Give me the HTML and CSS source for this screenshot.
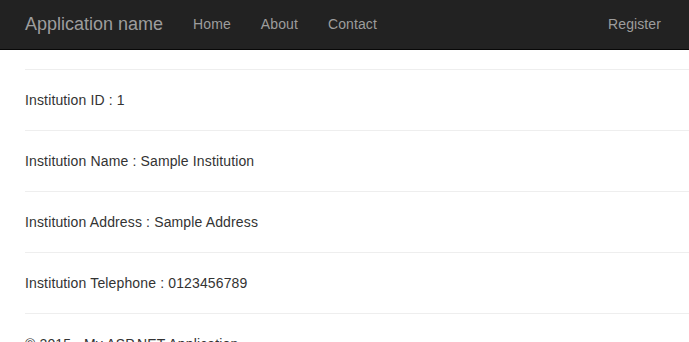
FILE: index.html
```html
<!DOCTYPE html>
<html>
<head>
<meta charset="utf-8">
<title>Institution</title>
<link rel="stylesheet" href="styles.css">
</head>
<body>
<nav class="navbar">
  <a class="brand" href="#">Application name</a>
  <ul class="nav">
    <li><a href="#">Home</a></li>
    <li><a href="#">About</a></li>
    <li><a href="#">Contact</a></li>
  </ul>
  <ul class="nav nav-right">
    <li><a href="#">Register</a></li>
  </ul>
</nav>
<main class="body-content">
  <hr class="first">
  <p class="row">Institution ID : 1</p>
  <hr>
  <p class="row">Institution Name : Sample Institution</p>
  <hr>
  <p class="row">Institution Address : Sample Address</p>
  <hr>
  <p class="row">Institution Telephone : 0123456789</p>
  <hr>
  <footer class="footer">
    <p class="row">&copy; 2015 - My ASP.NET Application</p>
  </footer>
</main>
</body>
</html>
```
FILE: styles.css
```css
html, body {
  margin: 0;
  padding: 0;
}
body {
  font-family: "Liberation Sans", Arial, Helvetica, sans-serif;
  font-size: 14px;
  line-height: 20px;
  color: #333;
  background: #fff;
  overflow: hidden;
}
.navbar {
  box-sizing: border-box;
  height: 50px;
  background: #222;
  border-bottom: 1px solid #080808;
  display: flex;
  align-items: flex-start;
  padding-left: 10px;
  padding-right: 13px;
}
.brand {
  display: block;
  padding: 14px 15px 15px 15px;
  font-size: 18px;
  line-height: 20px;
  color: #9d9d9d;
  text-decoration: none;
}
.nav {
  list-style: none;
  margin: 0;
  padding: 0;
  display: flex;
}
.nav a {
  display: block;
  padding: 14px 15px 15px 15px;
  line-height: 20px;
  color: #9d9d9d;
  text-decoration: none;
  letter-spacing: 0.1px;
}
.nav-right {
  margin-left: auto;
}
.body-content {
  display: flow-root;
  padding-left: 25px;
}
hr {
  margin: 20px 0;
  border: 0;
  border-top: 1px solid #eee;
  height: 0;
}
hr.first {
  margin-top: 19px;
}
.row {
  margin: 0;
  letter-spacing: 0.14px;
}
```
